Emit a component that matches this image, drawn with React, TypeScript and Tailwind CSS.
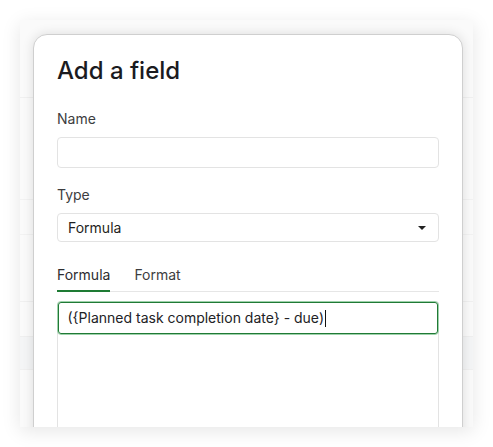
import React from "react";

export default function App() {
  const font = { fontFamily: "Inter, 'Noto Sans', sans-serif" };
  return (
    <div className="w-[493px] h-[447px] bg-white p-[20px]" style={font}>
      <div className="relative w-[453px] h-[407px] bg-[#fafafa] overflow-hidden shadow-[0_4px_18px_rgba(0,0,0,0.10)]">
        {/* background rows behind dialog */}
        <div className="flex flex-col">
          <div className="h-[78px] border-b border-[#f0f0f0]" />
          <div className="h-[102px] border-b border-[#f2f2f2]" />
          <div className="h-[35px] border-b border-[#f2f2f2]" />
          <div className="h-[67px] border-b border-[#f0f0f0]" />
          <div className="h-[35px] border-b border-[#efefef]" />
          <div className="h-[33px] border-b border-[#f0f0f0] bg-[#f4f5f6]" />
        </div>

        {/* dialog */}
        <div className="absolute left-[13px] top-[14px] w-[430px] h-[420px] bg-white border border-[#cfcfcf] rounded-t-[14px] shadow-[0_0_12px_rgba(0,0,0,0.12)] px-[23px] pt-[20px]">
          <h1 className="text-[24px] leading-[32px] font-medium text-[#1b1b1f]">
            Add a field
          </h1>

          <div className="mt-[22px] text-[14px] leading-[20px] text-[#3d3d40]">Name</div>
          <div className="mt-[8px] h-[31px] rounded-[4px] border border-[#e3e3e3] bg-white" />

          <div className="mt-[17px] text-[14px] leading-[20px] text-[#3d3d40]">Type</div>
          <div className="mt-[8px] h-[29px] rounded-[4px] border border-[#e3e3e3] bg-white flex items-center justify-between pl-[10px] pr-[12px]">
            <span className="text-[14px] leading-[20px] text-[#1f1f22]">Formula</span>
            <svg width="8" height="4" viewBox="0 0 8 4" className="mt-[1px]">
              <path d="M0 0 L8 0 L4 4 Z" fill="#222" />
            </svg>
          </div>

          <div className="mt-[23px] flex gap-[24px] border-b border-[#e6e6e6]">
            <div className="-mb-px pb-[5px] border-b-2 border-[#1e7b34] text-[14px] leading-[20px] text-[#2d2d30]">
              Formula
            </div>
            <div className="-mb-px pb-[5px] border-b-2 border-transparent text-[14px] leading-[20px] text-[#3d3d40]">
              Format
            </div>
          </div>

          <div className="mt-[9px] h-[200px] flex flex-col rounded-[4px] border-x border-[#e3e3e3]">
            <div className="-mx-px h-[34px] rounded-[4px] border border-[#9ed2ab]">
              <div className="h-full rounded-[3px] border-[1.5px] border-[#217a36] flex items-center pl-[8.5px]">
                <span className="text-[14px] leading-[20px] text-[#222225]">
                  {"({Planned task completion date} - due)"}
                </span>
                <span className="ml-[1px] w-[1px] h-[17px] bg-[#111]" />
              </div>
            </div>
          </div>
        </div>
      </div>
    </div>
  );
}
